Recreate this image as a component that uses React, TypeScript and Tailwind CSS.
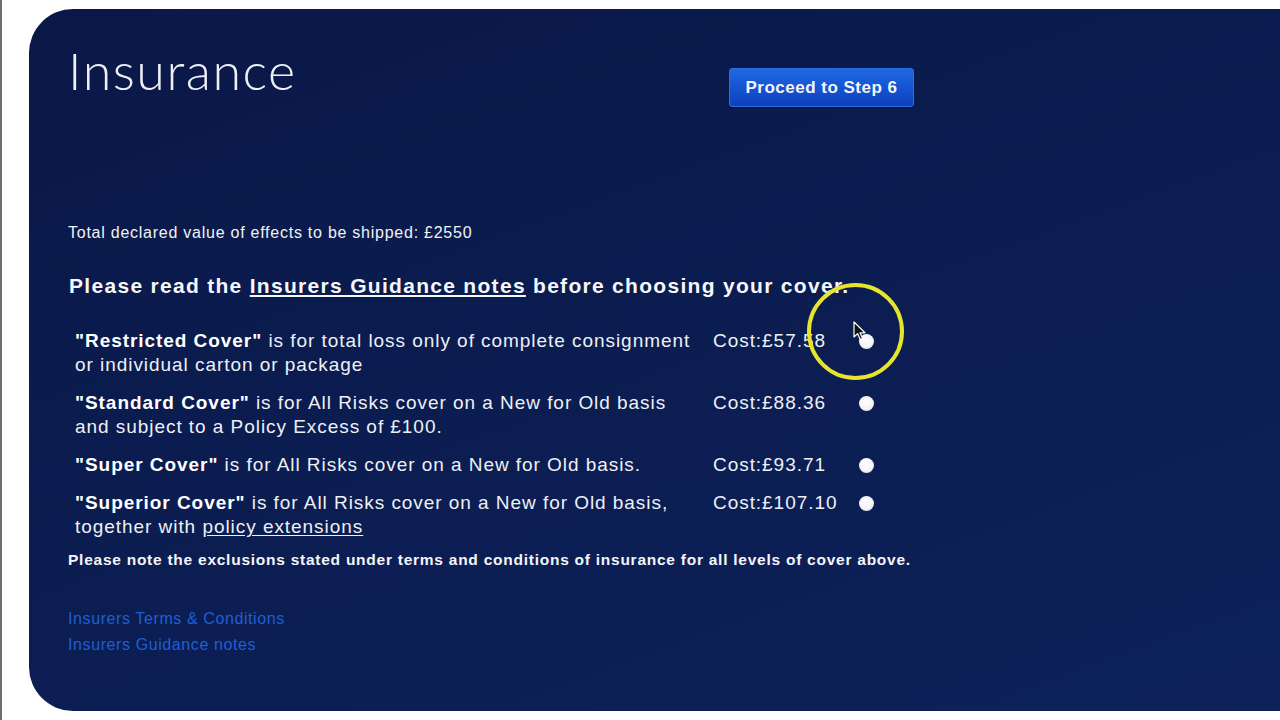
const rows = [
  {
    name: '"Restricted Cover"',
    text: ' is for total loss only of complete consignment or individual carton or package',
    cost: 'Cost:£57.58',
  },
  {
    name: '"Standard Cover"',
    text: ' is for All Risks cover on a New for Old basis and subject to a Policy Excess of £100.',
    cost: 'Cost:£88.36',
  },
  {
    name: '"Super Cover"',
    text: ' is for All Risks cover on a New for Old basis.',
    cost: 'Cost:£93.71',
  },
  {
    name: '"Superior Cover"',
    text: ' is for All Risks cover on a New for Old basis, together with ',
    link: 'policy extensions',
    cost: 'Cost:£107.10',
  },
];

const Radio = () => (
  <span className="block w-[15px] h-[15px] rounded-full bg-[radial-gradient(circle_at_45%_40%,#ffffff_0%,#f4f4f6_55%,#cfd2dc_100%)]" />
);

const Cursor = () => (
  <svg className="absolute left-[851px] top-[321px]" width="14" height="21" viewBox="0 0 14 21">
    <path d="M1 1 L1 16 L4.6 12.6 L7.2 18.6 L9.6 17.6 L7 11.8 L12 11.8 Z" fill="#111" stroke="#fff" strokeWidth="1.2" strokeLinejoin="round" />
  </svg>
);

export default function App() {
  return (
    <div className="relative w-[1280px] h-[720px] overflow-hidden bg-white border-l-2 border-[#6b6e75] pt-[9px] pl-[27px] font-['Liberation_Sans',Arial,sans-serif]">
      <div className="h-[702px] rounded-l-[44px] bg-[linear-gradient(160deg,#0a1847_0%,#0b1c50_45%,#0d2259_100%)] pl-[39px] pt-[35px] text-white">
        <div className="flex items-start">
          <h1 className="w-[661px] text-[52px] leading-none font-light font-['Lato','Open_Sans',sans-serif] tracking-[1.5px] text-[#eef0f6]">
            Insurance
          </h1>
          <button className="mt-[24px] w-[185px] h-[39px] rounded-[3px] bg-[linear-gradient(180deg,#1f68e0_0%,#1552cf_55%,#0d40bd_100%)] border border-[#2a6fe0] text-[17px] font-bold tracking-[0.5px] text-[#f2f5ff] shadow-[0_1px_2px_rgba(0,0,0,0.4)]">
            Proceed to Step 6
          </button>
        </div>

        <p className="mt-[117px] text-[16px] leading-[18px] tracking-[0.75px] text-[#f1f2f6]">
          Total declared value of effects to be shipped: £2550
        </p>

        <p className="mt-[32px] ml-px text-[21px] leading-[24px] font-bold tracking-[1.3px] text-[#f6f7fa]">
          Please read the <span className="underline underline-offset-2">Insurers Guidance notes</span> before choosing your cover.
        </p>

        <div className="mt-[24px] ml-[7px] flex flex-col">
          {rows.map((r) => (
            <div key={r.cost} className="flex items-start py-[7px] text-[19px] leading-[24px] tracking-[0.95px] text-[#eef0f5]">
              <div className="w-[630px]">
                <span className="font-bold text-white">{r.name}</span>
                {r.text}
                {r.link && <span className="underline underline-offset-2">{r.link}</span>}
              </div>
              <div className="ml-[8px] w-[146px]">{r.cost}</div>
              <div className="pt-[5px]">
                <Radio />
              </div>
            </div>
          ))}
        </div>

        <p className="mt-[5px] text-[15.5px] leading-[18px] font-bold tracking-[0.75px] text-[#f4f5f8]">
          Please note the exclusions stated under terms and conditions of insurance for all levels of cover above.
        </p>

        <div className="mt-[37px] flex flex-col text-[16px] leading-[26px] tracking-[0.6px] text-[#1f5fd2]">
          <a>Insurers Terms &amp; Conditions</a>
          <a>Insurers Guidance notes</a>
        </div>
      </div>

      <span className="absolute left-[805px] top-[283px] w-[97px] h-[97px] rounded-full border-[4px] border-[#e4e52c]" />
      <Cursor />
    </div>
  );
}
